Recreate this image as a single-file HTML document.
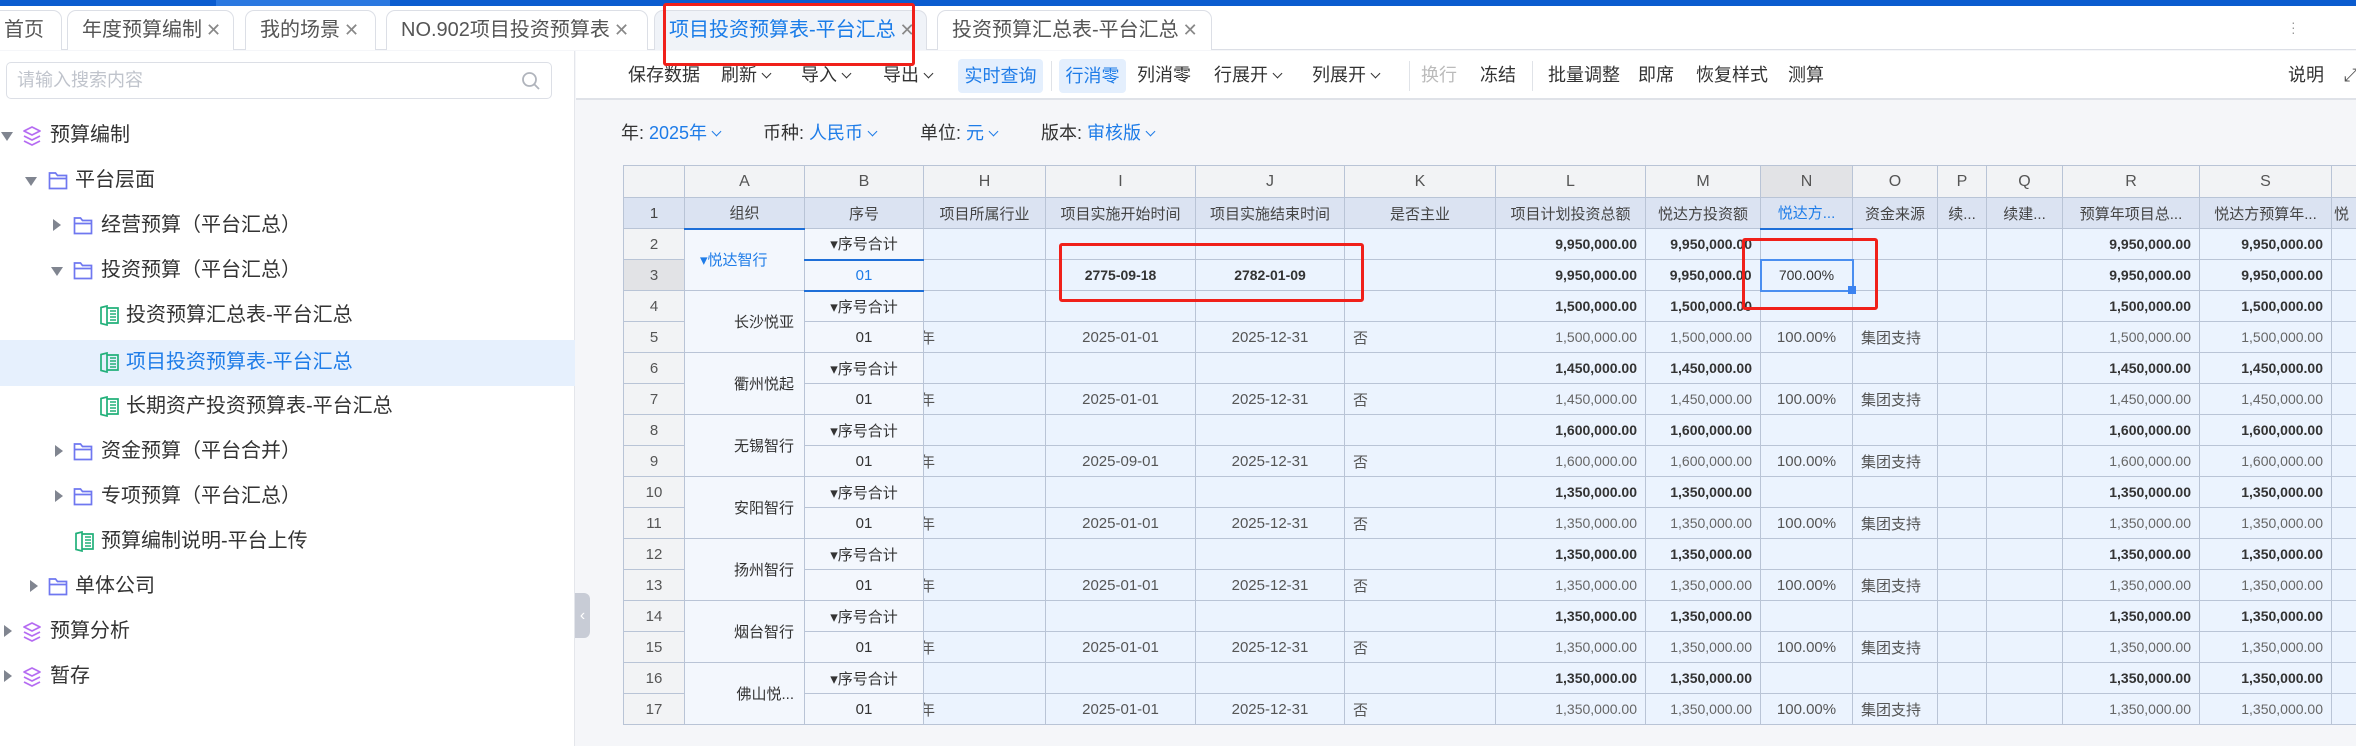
<!DOCTYPE html>
<html><head><meta charset="utf-8"><style>
*{box-sizing:border-box;margin:0;padding:0}
body{width:2356px;height:746px;overflow:hidden;background:#f5f6f9;font-family:"Liberation Sans","Noto Sans CJK SC",sans-serif;position:relative;color:#333}
.abs{position:absolute}
.topbar{left:0;top:0;width:2356px;height:6px;background:#0b5ccf}
.tabs{left:0;top:6px;width:2356px;height:44px;background:#fff;border-bottom:1px solid #dcdfe6}
.tab{position:absolute;top:4px;height:40px;border:1px solid #dcdfe6;border-bottom:none;border-radius:9px 9px 0 0;font-size:20px;line-height:38px;color:#555;padding-left:14px;white-space:nowrap;background:#fff}
.tab .x{color:#888;font-size:18px;margin-left:4px}
.side{left:0;top:51px;width:575px;height:695px;background:#fff;border-right:1px solid #e4e6eb}
.search{left:6px;top:62px;width:546px;height:37px;border:1px solid #dcdfe6;border-radius:5px;background:#fff;font-size:18px;color:#c0c4cc;line-height:35px;padding-left:10px}
.ti{position:absolute;left:0;width:575px;height:45px;font-size:20px;line-height:45px;color:#333;white-space:nowrap}
.ti.sel{background:#e6f0fd;color:#1e7ce8}
.ti svg,.ti i{position:absolute}
.tri-d{width:0;height:0;border-left:6px solid transparent;border-right:6px solid transparent;border-top:9px solid #808590;top:19px}
.tri-r{width:0;height:0;border-top:6px solid transparent;border-bottom:6px solid transparent;border-left:8px solid #808590;top:16px}
.ti span{position:absolute}
.handle{left:575px;top:593px;width:15px;height:45px;background:#c8ccd6;border-radius:0 6px 6px 0;color:#fff;font-size:16px;line-height:45px;text-align:center}
.toolbar{left:576px;top:51px;width:1780px;height:49px;background:#fff;border-bottom:2px solid #dfe2e8}
.tb{position:absolute;top:0;height:49px;line-height:49px;font-size:18px;color:#333;white-space:nowrap}
.btn{position:absolute;top:8px;height:34px;line-height:34px;background:#e4effd;color:#1e7ce8;border-radius:4px;font-size:18px;text-align:center}
.chev{display:inline-block;width:7px;height:7px;border-right:1.6px solid currentColor;border-bottom:1.6px solid currentColor;transform:rotate(45deg);margin-left:6px;position:relative;top:-4px}
.sep{position:absolute;top:10px;width:1px;height:30px;background:#e0e3e8}
.flt{position:absolute;top:118px;font-size:18px;line-height:30px;color:#333;white-space:nowrap}
.flt b{font-weight:normal;color:#1e7ce8}
.grid{left:623px;top:165px;width:1733px;height:560px;overflow:hidden}
table{border-collapse:collapse;table-layout:fixed;width:1760px}
td{border:1px solid #b9c4d6;height:31px;font-size:15px;white-space:nowrap;overflow:hidden;padding:0 8px;background:#ebf3fe;color:#555}
tr.hd td{height:32px;background:#f2f3f5;text-align:center;color:#555;font-size:16px}
tr.h1 td{background:#dbe3f2;text-align:center;color:#444;font-size:15px;padding:0 2px}
td.rn{background:#f2f3f5;text-align:center;color:#555;padding:0}
td.a{background:#f3f7fd;text-align:right;color:#333;padding-right:10px}
td.b{background:#f3f7fd;text-align:center;color:#333}
td.c{text-align:center}
td.n{text-align:right;font-size:14px;color:#666}
td.bd{font-weight:bold;color:#333}
td.h{padding:0;text-indent:-4px}
.red{position:absolute;border:3px solid #f0201a;border-radius:3px}
</style></head><body>
<div class="abs topbar"></div>
<div class="abs" style="left:216px;top:0;width:174px;height:6px;background:#2a78e0"></div>
<div class="abs tabs">
<div class="tab" style="left:-20px;width:82px;padding-left:24px;border-left:none">首页</div>
<div class="tab" style="left:67px;width:167px">年度预算编制<span class="x">✕</span></div>
<div class="tab" style="left:245px;width:131px">我的场景<span class="x">✕</span></div>
<div class="tab" style="left:386px;width:262px">NO.902项目投资预算表<span class="x">✕</span></div>
<div class="tab" style="left:654px;width:273px;background:#f0f3f8;color:#1a7ce8">项目投资预算表-平台汇总<span class="x">✕</span></div>
<div class="tab" style="left:937px;width:275px">投资预算汇总表-平台汇总<span class="x">✕</span></div>
<div style="position:absolute;left:2291px;top:14px;color:#999;font-size:14px;line-height:5px">·<br>·<br>·</div>
</div>

<div class="abs side"></div>
<div class="abs search">请输入搜索内容<svg style="position:absolute;right:10px;top:8px" width="20" height="20" viewBox="0 0 20 20"><circle cx="8.5" cy="8.5" r="6.5" fill="none" stroke="#b0b4bc" stroke-width="1.8"/><path d="M13.5 13.5L18 18" stroke="#b0b4bc" stroke-width="1.8"/></svg></div>

<div class="ti" style="top:113px"><i class="tri-d" style="left:1px"></i><svg style="left:22px;top:12px" width="20" height="22" viewBox="0 0 20 22"><path d="M10 2L18 6L10 10L2 6Z M2 11L10 15L18 11 M2 16L10 20L18 16" fill="none" stroke="#b56cf2" stroke-width="1.7" stroke-linejoin="round"/></svg><span style="left:50px">预算编制</span></div>
<div class="ti" style="top:158px"><i class="tri-d" style="left:25px"></i><svg style="left:48px;top:13px" width="20" height="19" viewBox="0 0 20 19"><path d="M1.5 2h6l2 2.5h9V17.5h-17Z M1.5 7.5h17" fill="none" stroke="#6f77f0" stroke-width="1.7"/></svg><span style="left:75px">平台层面</span></div>
<div class="ti" style="top:203px"><i class="tri-r" style="left:53px"></i><svg style="left:73px;top:13px" width="20" height="19" viewBox="0 0 20 19"><path d="M1.5 2h6l2 2.5h9V17.5h-17Z M1.5 7.5h17" fill="none" stroke="#6f77f0" stroke-width="1.7"/></svg><span style="left:101px">经营预算（平台汇总）</span></div>
<div class="ti" style="top:248px"><i class="tri-d" style="left:51px"></i><svg style="left:73px;top:13px" width="20" height="19" viewBox="0 0 20 19"><path d="M1.5 2h6l2 2.5h9V17.5h-17Z M1.5 7.5h17" fill="none" stroke="#6f77f0" stroke-width="1.7"/></svg><span style="left:101px">投资预算（平台汇总）</span></div>
<div class="ti" style="top:293px"><svg style="left:99px;top:12px" width="21" height="21" viewBox="0 0 21 21"><path d="M2 2.5L8 1v19l-6-1.5Z M8 3h11v15H8" fill="none" stroke="#22b07a" stroke-width="1.7"/><path d="M11 6h6M11 9h6M11 12h6M11 15h6" stroke="#22b07a" stroke-width="1.6"/></svg><span style="left:126px">投资预算汇总表-平台汇总</span></div>
<div class="ti sel" style="top:340px;height:46px"><svg style="left:99px;top:12px" width="21" height="21" viewBox="0 0 21 21"><path d="M2 2.5L8 1v19l-6-1.5Z M8 3h11v15H8" fill="none" stroke="#22b07a" stroke-width="1.7"/><path d="M11 6h6M11 9h6M11 12h6M11 15h6" stroke="#22b07a" stroke-width="1.6"/></svg><span style="left:126px">项目投资预算表-平台汇总</span></div>
<div class="ti" style="top:384px"><svg style="left:99px;top:12px" width="21" height="21" viewBox="0 0 21 21"><path d="M2 2.5L8 1v19l-6-1.5Z M8 3h11v15H8" fill="none" stroke="#22b07a" stroke-width="1.7"/><path d="M11 6h6M11 9h6M11 12h6M11 15h6" stroke="#22b07a" stroke-width="1.6"/></svg><span style="left:126px">长期资产投资预算表-平台汇总</span></div>
<div class="ti" style="top:429px"><i class="tri-r" style="left:55px"></i><svg style="left:73px;top:13px" width="20" height="19" viewBox="0 0 20 19"><path d="M1.5 2h6l2 2.5h9V17.5h-17Z M1.5 7.5h17" fill="none" stroke="#6f77f0" stroke-width="1.7"/></svg><span style="left:101px">资金预算（平台合并）</span></div>
<div class="ti" style="top:474px"><i class="tri-r" style="left:55px"></i><svg style="left:73px;top:13px" width="20" height="19" viewBox="0 0 20 19"><path d="M1.5 2h6l2 2.5h9V17.5h-17Z M1.5 7.5h17" fill="none" stroke="#6f77f0" stroke-width="1.7"/></svg><span style="left:101px">专项预算（平台汇总）</span></div>
<div class="ti" style="top:519px"><svg style="left:74px;top:12px" width="21" height="21" viewBox="0 0 21 21"><path d="M2 2.5L8 1v19l-6-1.5Z M8 3h11v15H8" fill="none" stroke="#22b07a" stroke-width="1.7"/><path d="M11 6h6M11 9h6M11 12h6M11 15h6" stroke="#22b07a" stroke-width="1.6"/></svg><span style="left:101px">预算编制说明-平台上传</span></div>
<div class="ti" style="top:564px"><i class="tri-r" style="left:30px"></i><svg style="left:48px;top:13px" width="20" height="19" viewBox="0 0 20 19"><path d="M1.5 2h6l2 2.5h9V17.5h-17Z M1.5 7.5h17" fill="none" stroke="#6f77f0" stroke-width="1.7"/></svg><span style="left:75px">单体公司</span></div>
<div class="ti" style="top:609px"><i class="tri-r" style="left:4px"></i><svg style="left:22px;top:12px" width="20" height="22" viewBox="0 0 20 22"><path d="M10 2L18 6L10 10L2 6Z M2 11L10 15L18 11 M2 16L10 20L18 16" fill="none" stroke="#b56cf2" stroke-width="1.7" stroke-linejoin="round"/></svg><span style="left:50px">预算分析</span></div>
<div class="ti" style="top:654px"><i class="tri-r" style="left:4px"></i><svg style="left:22px;top:12px" width="20" height="22" viewBox="0 0 20 22"><path d="M10 2L18 6L10 10L2 6Z M2 11L10 15L18 11 M2 16L10 20L18 16" fill="none" stroke="#b56cf2" stroke-width="1.7" stroke-linejoin="round"/></svg><span style="left:50px">暂存</span></div>
<div class="abs handle">‹</div>

<div class="abs toolbar">
<div class="tb" style="left:52px">保存数据</div>
<div class="tb" style="left:145px">刷新<i class="chev"></i></div>
<div class="tb" style="left:225px">导入<i class="chev"></i></div>
<div class="tb" style="left:307px">导出<i class="chev"></i></div>
<div class="btn" style="left:382px;width:85px">实时查询</div>
<div class="sep" style="left:475px"></div>
<div class="btn" style="left:483px;width:67px">行消零</div>
<div class="tb" style="left:561px">列消零</div>
<div class="tb" style="left:638px">行展开<i class="chev"></i></div>
<div class="tb" style="left:736px">列展开<i class="chev"></i></div>
<div class="sep" style="left:833px"></div>
<div class="tb" style="left:845px;color:#bbb">换行</div>
<div class="tb" style="left:904px">冻结</div>
<div class="sep" style="left:956px"></div>
<div class="tb" style="left:972px">批量调整</div>
<div class="tb" style="left:1062px">即席</div>
<div class="tb" style="left:1120px">恢复样式</div>
<div class="tb" style="left:1212px">测算</div>
<div class="tb" style="left:1712px">说明</div>
<div class="tb" style="left:1768px;color:#555">⤢</div>
</div>

<div class="flt" style="left:621px">年: <b>2025年</b><i class="chev" style="color:#1e7ce8"></i></div>
<div class="flt" style="left:763px">币种: <b>人民币</b><i class="chev" style="color:#1e7ce8"></i></div>
<div class="flt" style="left:920px">单位: <b>元</b><i class="chev" style="color:#1e7ce8"></i></div>
<div class="flt" style="left:1041px">版本: <b>审核版</b><i class="chev" style="color:#1e7ce8"></i></div>

<div class="abs grid">
<table>
<colgroup><col style="width:61px"><col style="width:120px"><col style="width:119px"><col style="width:122px"><col style="width:150px"><col style="width:149px"><col style="width:151px"><col style="width:150px"><col style="width:115px"><col style="width:92px"><col style="width:85px"><col style="width:49px"><col style="width:76px"><col style="width:137px"><col style="width:132px"><col style="width:155px"></colgroup>
<tr class="hd"><td></td><td>A</td><td>B</td><td>H</td><td>I</td><td>J</td><td>K</td><td>L</td><td>M</td><td style="background:#e2e3e6">N</td><td>O</td><td>P</td><td>Q</td><td>R</td><td>S</td><td></td></tr>
<tr class="h1"><td class="rn">1</td><td>组织</td><td>序号</td><td>项目所属行业</td><td>项目实施开始时间</td><td>项目实施结束时间</td><td>是否主业</td><td>项目计划投资总额</td><td>悦达方投资额</td><td style="color:#1e7ce8;border-bottom:2px solid #1e6fd8">悦达方...</td><td>资金来源</td><td>续...</td><td>续建...</td><td>预算年项目总...</td><td>悦达方预算年...</td><td style="text-align:left">悦</td></tr>
<tr><td class="rn">2</td><td rowspan="2" class="a" style="border-top:2px solid #1e6fd8;color:#1e7ce8;text-align:left;padding-left:15px">▾悦达智行</td><td class="b" style="border-bottom:2px solid #1e6fd8">▾序号合计</td><td></td><td></td><td></td><td></td><td class="n bd">9,950,000.00</td><td class="n bd">9,950,000.00</td><td></td><td></td><td></td><td></td><td class="n bd">9,950,000.00</td><td class="n bd">9,950,000.00</td><td></td></tr>
<tr><td class="rn" style="background:#e2e3e6">3</td><td class="b" style="color:#1e7ce8;border-bottom:2px solid #1e6fd8">01</td><td></td><td class="c bd" style="font-size:14px">2775-09-18</td><td class="c bd" style="font-size:14px">2782-01-09</td><td></td><td class="n bd">9,950,000.00</td><td class="n bd">9,950,000.00</td><td class="c" style="border:2px solid #4a8ef0;color:#333;font-size:14px">700.00%</td><td></td><td></td><td></td><td class="n bd">9,950,000.00</td><td class="n bd">9,950,000.00</td><td></td></tr>
<tr><td class="rn">4</td><td rowspan="2" class="a">长沙悦亚</td><td class="b">▾序号合计</td><td></td><td></td><td></td><td></td><td class="n bd">1,500,000.00</td><td class="n bd">1,500,000.00</td><td></td><td></td><td></td><td></td><td class="n bd">1,500,000.00</td><td class="n bd">1,500,000.00</td><td></td></tr>
<tr><td class="rn">5</td><td class="b">01</td><td class="h">年</td><td class="c">2025-01-01</td><td class="c">2025-12-31</td><td>否</td><td class="n">1,500,000.00</td><td class="n">1,500,000.00</td><td class="c">100.00%</td><td>集团支持</td><td></td><td></td><td class="n">1,500,000.00</td><td class="n">1,500,000.00</td><td></td></tr>
<tr><td class="rn">6</td><td rowspan="2" class="a">衢州悦起</td><td class="b">▾序号合计</td><td></td><td></td><td></td><td></td><td class="n bd">1,450,000.00</td><td class="n bd">1,450,000.00</td><td></td><td></td><td></td><td></td><td class="n bd">1,450,000.00</td><td class="n bd">1,450,000.00</td><td></td></tr>
<tr><td class="rn">7</td><td class="b">01</td><td class="h">年</td><td class="c">2025-01-01</td><td class="c">2025-12-31</td><td>否</td><td class="n">1,450,000.00</td><td class="n">1,450,000.00</td><td class="c">100.00%</td><td>集团支持</td><td></td><td></td><td class="n">1,450,000.00</td><td class="n">1,450,000.00</td><td></td></tr>
<tr><td class="rn">8</td><td rowspan="2" class="a">无锡智行</td><td class="b">▾序号合计</td><td></td><td></td><td></td><td></td><td class="n bd">1,600,000.00</td><td class="n bd">1,600,000.00</td><td></td><td></td><td></td><td></td><td class="n bd">1,600,000.00</td><td class="n bd">1,600,000.00</td><td></td></tr>
<tr><td class="rn">9</td><td class="b">01</td><td class="h">年</td><td class="c">2025-09-01</td><td class="c">2025-12-31</td><td>否</td><td class="n">1,600,000.00</td><td class="n">1,600,000.00</td><td class="c">100.00%</td><td>集团支持</td><td></td><td></td><td class="n">1,600,000.00</td><td class="n">1,600,000.00</td><td></td></tr>
<tr><td class="rn">10</td><td rowspan="2" class="a">安阳智行</td><td class="b">▾序号合计</td><td></td><td></td><td></td><td></td><td class="n bd">1,350,000.00</td><td class="n bd">1,350,000.00</td><td></td><td></td><td></td><td></td><td class="n bd">1,350,000.00</td><td class="n bd">1,350,000.00</td><td></td></tr>
<tr><td class="rn">11</td><td class="b">01</td><td class="h">年</td><td class="c">2025-01-01</td><td class="c">2025-12-31</td><td>否</td><td class="n">1,350,000.00</td><td class="n">1,350,000.00</td><td class="c">100.00%</td><td>集团支持</td><td></td><td></td><td class="n">1,350,000.00</td><td class="n">1,350,000.00</td><td></td></tr>
<tr><td class="rn">12</td><td rowspan="2" class="a">扬州智行</td><td class="b">▾序号合计</td><td></td><td></td><td></td><td></td><td class="n bd">1,350,000.00</td><td class="n bd">1,350,000.00</td><td></td><td></td><td></td><td></td><td class="n bd">1,350,000.00</td><td class="n bd">1,350,000.00</td><td></td></tr>
<tr><td class="rn">13</td><td class="b">01</td><td class="h">年</td><td class="c">2025-01-01</td><td class="c">2025-12-31</td><td>否</td><td class="n">1,350,000.00</td><td class="n">1,350,000.00</td><td class="c">100.00%</td><td>集团支持</td><td></td><td></td><td class="n">1,350,000.00</td><td class="n">1,350,000.00</td><td></td></tr>
<tr><td class="rn">14</td><td rowspan="2" class="a">烟台智行</td><td class="b">▾序号合计</td><td></td><td></td><td></td><td></td><td class="n bd">1,350,000.00</td><td class="n bd">1,350,000.00</td><td></td><td></td><td></td><td></td><td class="n bd">1,350,000.00</td><td class="n bd">1,350,000.00</td><td></td></tr>
<tr><td class="rn">15</td><td class="b">01</td><td class="h">年</td><td class="c">2025-01-01</td><td class="c">2025-12-31</td><td>否</td><td class="n">1,350,000.00</td><td class="n">1,350,000.00</td><td class="c">100.00%</td><td>集团支持</td><td></td><td></td><td class="n">1,350,000.00</td><td class="n">1,350,000.00</td><td></td></tr>
<tr><td class="rn">16</td><td rowspan="2" class="a">佛山悦...</td><td class="b">▾序号合计</td><td></td><td></td><td></td><td></td><td class="n bd">1,350,000.00</td><td class="n bd">1,350,000.00</td><td></td><td></td><td></td><td></td><td class="n bd">1,350,000.00</td><td class="n bd">1,350,000.00</td><td></td></tr>
<tr><td class="rn">17</td><td class="b">01</td><td class="h">年</td><td class="c">2025-01-01</td><td class="c">2025-12-31</td><td>否</td><td class="n">1,350,000.00</td><td class="n">1,350,000.00</td><td class="c">100.00%</td><td>集团支持</td><td></td><td></td><td class="n">1,350,000.00</td><td class="n">1,350,000.00</td><td></td></tr>
</table>
</div>
<div class="abs" style="left:1848px;top:286px;width:8px;height:8px;background:#3b82f0"></div>

<div class="red" style="left:663px;top:3px;width:252px;height:63px"></div>
<div class="red" style="left:1059px;top:243px;width:305px;height:59px"></div>
<div class="red" style="left:1742px;top:238px;width:136px;height:72px"></div>
</body></html>
